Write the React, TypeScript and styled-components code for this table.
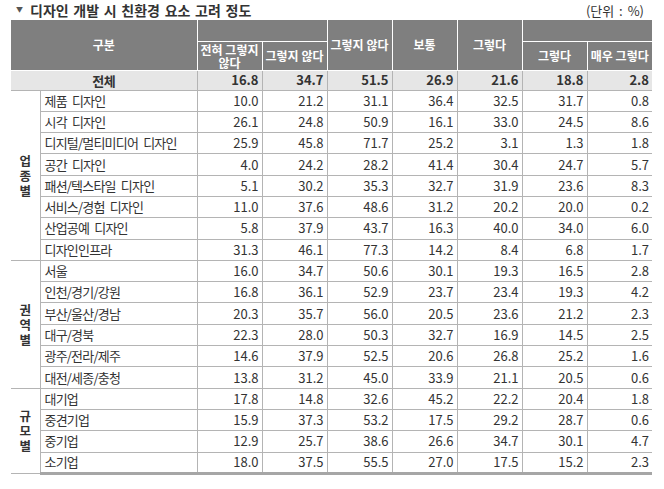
import * as React from 'react';
import styled, { createGlobalStyle } from 'styled-components';

const GlobalStyle = createGlobalStyle`
  html, body {
    margin: 0;
    padding: 0;
    background: #ffffff;
  }
  body {
    font-family: 'Noto Sans CJK KR', 'Noto Sans', sans-serif;
    color: #333333;
  }
`;

type Row = { label: string; values: number[] };
type Group = { name: string; rows: Row[] };

const total = [16.8, 34.7, 51.5, 26.9, 21.6, 18.8, 2.8];

const groups: Group[] = [
  {
    name: '업종별',
    rows: [
      { label: '제품 디자인', values: [10.0, 21.2, 31.1, 36.4, 32.5, 31.7, 0.8] },
      { label: '시각 디자인', values: [26.1, 24.8, 50.9, 16.1, 33.0, 24.5, 8.6] },
      { label: '디지털/멀티미디어 디자인', values: [25.9, 45.8, 71.7, 25.2, 3.1, 1.3, 1.8] },
      { label: '공간 디자인', values: [4.0, 24.2, 28.2, 41.4, 30.4, 24.7, 5.7] },
      { label: '패션/텍스타일 디자인', values: [5.1, 30.2, 35.3, 32.7, 31.9, 23.6, 8.3] },
      { label: '서비스/경험 디자인', values: [11.0, 37.6, 48.6, 31.2, 20.2, 20.0, 0.2] },
      { label: '산업공예 디자인', values: [5.8, 37.9, 43.7, 16.3, 40.0, 34.0, 6.0] },
      { label: '디자인인프라', values: [31.3, 46.1, 77.3, 14.2, 8.4, 6.8, 1.7] },
    ],
  },
  {
    name: '권역별',
    rows: [
      { label: '서울', values: [16.0, 34.7, 50.6, 30.1, 19.3, 16.5, 2.8] },
      { label: '인천/경기/강원', values: [16.8, 36.1, 52.9, 23.7, 23.4, 19.3, 4.2] },
      { label: '부산/울산/경남', values: [20.3, 35.7, 56.0, 20.5, 23.6, 21.2, 2.3] },
      { label: '대구/경북', values: [22.3, 28.0, 50.3, 32.7, 16.9, 14.5, 2.5] },
      { label: '광주/전라/제주', values: [14.6, 37.9, 52.5, 20.6, 26.8, 25.2, 1.6] },
      { label: '대전/세종/충청', values: [13.8, 31.2, 45.0, 33.9, 21.1, 20.5, 0.6] },
    ],
  },
  {
    name: '규모별',
    rows: [
      { label: '대기업', values: [17.8, 14.8, 32.6, 45.2, 22.2, 20.4, 1.8] },
      { label: '중견기업', values: [15.9, 37.3, 53.2, 17.5, 29.2, 28.7, 0.6] },
      { label: '중기업', values: [12.9, 25.7, 38.6, 26.6, 34.7, 30.1, 4.7] },
      { label: '소기업', values: [18.0, 37.5, 55.5, 27.0, 17.5, 15.2, 2.3] },
    ],
  },
];

const lineColor = '#b4b4b4';
const headBg = '#7f7f7f';

const Page = styled.div`
  width: 664px;
  padding: 0 12px 0 11px;
  box-sizing: border-box;
`;

const TitleBar = styled.div`
  display: flex;
  align-items: center;
  justify-content: space-between;
  height: 20px;
`;

const Title = styled.h1`
  margin: 0;
  display: flex;
  align-items: center;
  font-size: 14px;
  font-weight: 700;
  word-spacing: 1.5px;
  color: #333333;
`;

const Marker = styled.span`
  font-size: 7px;
  color: #555555;
  margin: 0 7px 2px 5px;
`;

const Unit = styled.span`
  font-size: 13px;
  word-spacing: 2px;
  color: #333333;
  margin-right: 8px;
`;

const Table = styled.table`
  width: 641px;
  border-collapse: collapse;
  table-layout: fixed;
  font-size: 13px;
`;

const HeadCell = styled.th`
  background: ${headBg};
  color: #ffffff;
  font-weight: 700;
  font-size: 12px;
  line-height: 13px;
  padding: 0 2px;
  border: 1px solid #ffffff;
  border-top: none;
  vertical-align: middle;
  &:first-child {
    border-left: none;
  }
  &:last-child {
    border-right: none;
  }
`;

const HeadRow = styled.tr<{ $h: number }>`
  height: ${(p) => p.$h}px;
`;

const TotalRow = styled.tr`
  height: 20px;
  background: #e6e6e6;
  font-weight: 700;
`;

const BodyRow = styled.tr<{ $last?: boolean }>`
  height: 21.3px;
  & > td {
    border-bottom: ${(p) => (p.$last ? `3px solid #a6a6a6` : `1px solid ${lineColor}`)};
  }
`;

const TotalLabel = styled.td`
  text-align: center;
  padding: 0;
  letter-spacing: -0.4px;
  border-right: 1px solid ${lineColor};
  border-bottom: 1px solid ${lineColor};
`;

const GroupCell = styled.td`
  text-align: center;
  font-weight: 700;
  font-size: 12.5px;
  line-height: 15px;
  padding: 0;
  border-right: 1px solid ${lineColor};
  vertical-align: middle;
`;

const GroupText = styled.span`
  display: inline-block;
  width: 13px;
  word-break: break-all;
  white-space: normal;
`;

const LabelCell = styled.td`
  padding: 0 0 0 4px;
  white-space: nowrap;
  letter-spacing: -0.8px;
  word-spacing: 3px;
  border-right: 1px solid ${lineColor};
  line-height: 14px;
`;

const NumCell = styled.td`
  text-align: right;
  padding: 0 3px 0 0;
  line-height: 14px;
  border-right: 1px solid ${lineColor};
  border-bottom: 1px solid ${lineColor};
  &:last-child {
    border-right: none;
  }
`;

const fmt = (n: number) => n.toFixed(1);

export default function App() {
  return (
    <Page>
      <GlobalStyle />
      <TitleBar>
        <Title>
          <Marker>▼</Marker>
          디자인 개발 시 친환경 요소 고려 정도
        </Title>
        <Unit>(단위 : %)</Unit>
      </TitleBar>
      <Table>
        <colgroup>
          <col style={{ width: 29 }} />
          <col style={{ width: 157 }} />
          {total.map((_, i) => (
            <col key={i} style={{ width: 65 }} />
          ))}
        </colgroup>
        <thead>
          <HeadRow $h={21}>
            <HeadCell colSpan={2} rowSpan={2}>
              구분
            </HeadCell>
            <HeadCell colSpan={2} />
            <HeadCell rowSpan={2}>그렇지 않다</HeadCell>
            <HeadCell rowSpan={2}>보통</HeadCell>
            <HeadCell rowSpan={2}>그렇다</HeadCell>
            <HeadCell colSpan={2} />
          </HeadRow>
          <HeadRow $h={29}>
            <HeadCell>전혀 그렇지 않다</HeadCell>
            <HeadCell>그렇지 않다</HeadCell>
            <HeadCell>그렇다</HeadCell>
            <HeadCell>매우 그렇다</HeadCell>
          </HeadRow>
        </thead>
        <tbody>
          <TotalRow>
            <TotalLabel colSpan={2}>전체</TotalLabel>
            {total.map((v, i) => (
              <NumCell key={i}>{fmt(v)}</NumCell>
            ))}
          </TotalRow>
          {groups.map((g, gi) =>
            g.rows.map((r, ri) => (
              <BodyRow key={`${gi}-${ri}`} $last={gi === groups.length - 1 && ri === g.rows.length - 1}>
                {ri === 0 && (
                  <GroupCell rowSpan={g.rows.length}>
                    <GroupText>{g.name}</GroupText>
                  </GroupCell>
                )}
                <LabelCell>{r.label}</LabelCell>
                {r.values.map((v, i) => (
                  <NumCell key={i}>{fmt(v)}</NumCell>
                ))}
              </BodyRow>
            ))
          )}
        </tbody>
      </Table>
    </Page>
  );
}
